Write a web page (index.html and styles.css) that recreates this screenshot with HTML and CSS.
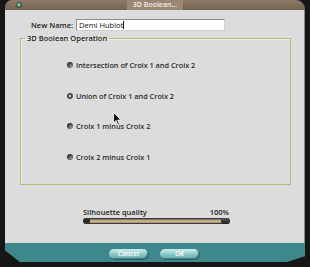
FILE: index.html
```html
<!DOCTYPE html>
<html>
<head>
<meta charset="utf-8">
<link rel="stylesheet" href="styles.css">
</head>
<body>
<div class="window">
  <div class="titlebar">
    <span class="dot"></span>
    <span class="title">3D Boolean...</span>
  </div>
  <div class="content">
    <div class="name-row">
      <label class="name-label">New Name:</label>
      <div class="name-input">Demi Hublot<span class="caret"></span></div>
    </div>
    <fieldset class="group">
      <legend>3D Boolean Operation</legend>
      <div class="option"><span class="radio"></span>Intersection of Croix 1 and Croix 2</div>
      <div class="option"><span class="radio on"></span>Union of Croix 1 and Croix 2</div>
      <div class="option"><span class="radio"></span>Croix 1 minus Croix 2</div>
      <div class="option"><span class="radio"></span>Croix 2 minus Croix 1</div>
    </fieldset>
    <div class="quality">
      <div class="quality-head"><span>Silhouette quality</span><span>100%</span></div>
      <div class="track"><span class="cap"></span><span class="thumb"></span></div>
    </div>
  </div>
  <div class="footer">
    <button class="btn">Cancel</button>
    <button class="btn">OK</button>
  </div>
</div>
<svg class="cursor" width="9" height="14" viewBox="0 0 9 14"><path d="M0.5 0.5 L0.5 11 L3 8.5 L5 13 L6.5 12.3 L4.6 8 L8 8 Z" fill="#111" stroke="#fff" stroke-width="0.8"/></svg>
</body>
</html>
```
FILE: styles.css
```css
html, body {
  margin: 0;
  padding: 0;
  background: #161616;
  width: 310px;
  height: 267px;
  overflow: hidden;
  font-family: "Open Sans", "Liberation Sans", sans-serif;
}
.window {
  margin-left: 5px;
  width: 300px;
  height: 262px;
  display: flex;
  flex-direction: column;
}
.titlebar {
  height: 10px;
  background: linear-gradient(#8d7b68, #74634f);
  border-radius: 7px 9px 0 0;
  position: relative;
  display: flex;
  align-items: center;
  justify-content: center;
}
.dot {
  position: absolute;
  left: 11px;
  top: 2px;
  width: 6px;
  height: 6px;
  border-radius: 50%;
  background: radial-gradient(circle at 40% 35%, #a8e0c8, #3f8f74 70%);
  border: 0.5px solid #2a4a3c;
  box-sizing: border-box;
}
.title {
  font-size: 7px;
  color: #f2ece4;
  background: #9a8874;
  padding: 0 6px;
  line-height: 10px;
  font-weight: 600;
}
.content {
  height: 233px;
  background: #dcdcdc;
  border-right: 1px solid #8a8a8a;
  box-sizing: border-box;
  padding: 8px 13px 0 15px;
  display: flex;
  flex-direction: column;
}
.name-row {
  display: flex;
  align-items: center;
  padding-left: 11px;
  height: 13px;
}
.name-label {
  font-size: 7.5px;
  font-weight: 600;
  color: #1e1e1e;
  margin-right: 3px;
}
.name-input {
  width: 149px;
  height: 12px;
  box-sizing: border-box;
  background: #fff;
  border: 1px solid #8e8e8e;
  border-bottom-color: #cfcfcf;
  border-right-color: #cfcfcf;
  font-size: 7.5px;
  line-height: 10px;
  padding-left: 2px;
  color: #111;
  display: flex;
  align-items: center;
}
.caret {
  width: 1px;
  height: 8px;
  background: #111;
}
.group {
  margin: 3px 0 0 0;
  padding: 0;
  height: 151px;
  box-sizing: border-box;
  border: 1px solid #b7b77a;
  box-shadow: inset 1px 1px 0 #f0f0e0;
  display: flex;
  flex-direction: column;
}
.group legend {
  font-size: 7.5px;
  font-weight: 600;
  color: #1e1e1e;
  padding: 0 2px;
  margin-left: 4px;
  line-height: 9px;
}
.option {
  display: flex;
  align-items: center;
  font-size: 7.3px;
  font-weight: 600;
  color: #2a2a2a;
  height: 8px;
  margin: 22.7px 0 0 46px;
}
.option:first-of-type {
  margin-top: 18px;
}
.radio {
  width: 6px;
  height: 6px;
  border-radius: 50%;
  margin-right: 3px;
  background: radial-gradient(circle at 65% 70%, #9a9a9a, #2c2c2c 70%);
  flex: none;
}
.radio.on {
  background: radial-gradient(circle at 50% 50%, #d8d8d8 30%, #3a3a3a 38%, #5a5a5a 75%);
}
.quality {
  margin: 23px 0 0 63px;
  width: 147px;
}
.quality-head {
  display: flex;
  justify-content: space-between;
  font-size: 7.5px;
  font-weight: 600;
  color: #1e1e1e;
  line-height: 9px;
  padding-right: 1px;
}
.track {
  position: relative;
  height: 4px;
  margin-top: 1px;
  background: linear-gradient(#6a5440, #d2bc9c 45%, #a88e70);
  border: 1px solid #3a3a3a;
  border-radius: 2px;
}
.cap {
  position: absolute;
  left: 0;
  top: 0;
  width: 6px;
  height: 4px;
  background: #2a2a2a;
  border-radius: 1px;
}
.thumb {
  position: absolute;
  right: 0;
  top: -1px;
  width: 8px;
  height: 6px;
  background: linear-gradient(#555, #1e1e1e);
  border-radius: 2px;
}
.footer {
  height: 19px;
  background: #3e878c;
  display: flex;
  align-items: center;
  padding: 2px 0 0 104px;
  box-sizing: border-box;
  gap: 12px;
  clip-path: polygon(0 0, 100% 0, 100% 70%, 94% 100%, 5% 100%, 0 40%);
}
.btn {
  width: 39px;
  height: 10px;
  border: none;
  padding: 0;
  border-radius: 5px;
  background: linear-gradient(#cfeeee, #82c2c2 60%, #66a8aa);
  box-shadow: inset -1px -1px 0 #3e7a7c, 1px 1px 0 #2c6466;
  font-family: "Open Sans", "Liberation Sans", sans-serif;
  font-size: 7px;
  font-style: italic;
  font-weight: 600;
  color: #fff;
  line-height: 10px;
}
.cursor {
  position: absolute;
  left: 113px;
  top: 112px;
}
```
